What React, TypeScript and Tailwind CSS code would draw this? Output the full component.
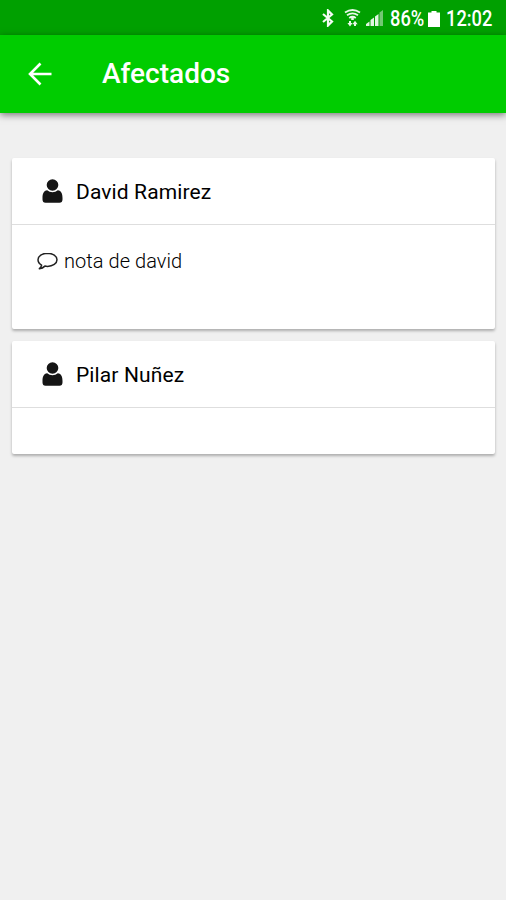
type Afectado = {
  name: string;
  note?: string;
};

const afectados: Afectado[] = [
  { name: "David Ramirez", note: "nota de david" },
  { name: "Pilar Nuñez" },
];

const StatusBar = () => {
  return (
    <div className="flex h-[35px] items-center bg-[#00a000] pl-[321px] pt-[2px] text-white">
      {/* Bluetooth */}
      <svg className="mb-[1px] h-[18px] w-[14px] shrink-0" viewBox="0 0 14 18" fill="none">
        <path
          d="M2 5l9 7.5L7 16.5v-15L11 5.5L2 13"
          stroke="#f4fbf4"
          strokeWidth="2.2"
        />
      </svg>
      {/* Wifi */}
      <svg
        className="mb-[1px] ml-[9px] h-[18px] w-[17px] shrink-0"
        viewBox="0 0 17 18"
        fill="none"
        stroke="#e8f7e8"
      >
        <path
          d="M1 3.5Q8.5-1.5 16 3.5M3 6.3Q8.5 2.5 14 6.3M5.2 9Q8.5 6.5 11.8 9"
          strokeWidth="1.8"
        />
        <path d="M8.5 8v3" strokeWidth="2.6" />
        <path d="M6 12v3M11 14v3" strokeWidth="2" />
        <path
          d="M3.4 14h5.2L6 17.4zM8.4 15.2h5.200L11 11.800z"
          fill="#e8f7e8"
          stroke="none"
        />
      </svg>
      {/* Signal */}
      <svg className="mb-[1px] ml-[5px] h-[18px] w-[18px] shrink-0" viewBox="0 0 18 18">
        <path
          d="M0 17v-2l3.5-2.5V17zM4.5 17v-6L8 8.5V17zM9 17V7.5L12.5 5v12z"
          fill="#e0f4e0"
        />
        <path d="M13.5 17V3.5L17 1v16z" fill="#73c873" />
      </svg>
      <div className="ml-[6px] mt-[3px] w-[38px] shrink-0">
        <span className="inline-block origin-left scale-x-[0.83] text-[22px] font-medium leading-[22px]">
          86%
        </span>
      </div>
      {/* Battery */}
      <svg className="h-[18px] w-[12px] shrink-0" viewBox="0 0 12 18">
        <path d="M3.5 1h5v1.5H12V17H0V2.5h3.5z" fill="#fff" />
      </svg>
      <div className="ml-[6px] mt-[3px] w-[50px] shrink-0">
        <span className="inline-block origin-left scale-x-[0.83] text-[22px] font-medium leading-[22px]">
          12:02
        </span>
      </div>
    </div>
  );
};

const Header = () => {
  return (
    <header className="relative flex h-[78px] items-center bg-[#00cc00] text-white shadow-[0_2px_7px_rgba(0,0,0,0.5)]">
      <button className="ml-[28px] shrink-0" aria-label="Volver">
        <svg className="h-[24px] w-[24px]" viewBox="0 0 24 24" fill="none">
          <path
            d="M23.5 12H2M12.5 1.5L2 12l10.5 10.5"
            stroke="#fff"
            strokeWidth="2.6"
          />
        </svg>
      </button>
      <h1 className="ml-[50px] whitespace-nowrap text-[28px] font-medium leading-8">
        Afectados
      </h1>
    </header>
  );
};

const UserIcon = () => {
  return (
    <svg className="h-[24px] w-[21px] shrink-0" viewBox="0 0 21 24" fill="#151515">
      <circle cx="10.5" cy="6" r="5.8" />
      <path d="M5.2 11.2C1.7 11.6.5 14.8.5 19v1.5c0 2 1.1 3.3 3 3.3h14c1.9 0 3-1.3 3-3.3V19c0-4.2-1.2-7.4-4.7-7.8-1.5 1.3-3.3 2-5.3 2s-3.8-.7-5.3-2z" />
    </svg>
  );
};

const CommentIcon = () => {
  return (
    <svg className="h-[18px] w-[21px] shrink-0" viewBox="0 0 21 18" fill="none">
      <path
        d="M10.5 1.2C5.2 1.2 1 4 1 7.8c0 2.2 1.4 4.1 3.6 5.3-.3 1.6-1.1 2.7-2.2 3.6 2.3-.3 4-1.1 5.5-2.6.8.2 1.7.3 2.6.3 5.3 0 9.5-2.9 9.5-6.6s-4.2-6.6-9.5-6.6z"
        stroke="#222"
        strokeWidth="1.5"
        strokeLinejoin="round"
      />
    </svg>
  );
};

const Card = ({ name, note }: Afectado) => {
  return (
    <div className="rounded-[2px] bg-white shadow-[0_2px_3px_rgba(0,0,0,0.28)]">
      <div className="flex h-[67px] items-center border-b-[1.5px] border-[#dedede] pl-[30px]">
        <UserIcon />
        <h2 className="ml-[13px] mt-[2px] text-[21px] font-normal leading-7 tracking-[0.12px] text-black">
          {name}
        </h2>
      </div>
      {note ? (
        <div className="flex h-[104px] items-start pl-[25px] pt-[22px]">
          <div className="flex items-center">
            <CommentIcon />
            <p className="ml-[6px] text-[20px] font-light leading-7 tracking-[0.05px] text-black">
              {note}
            </p>
          </div>
        </div>
      ) : (
        <div className="h-[46px]" />
      )}
    </div>
  );
};

const App = () => {
  return (
    <div className="min-h-screen bg-[#f0f0f0] font-['Roboto',sans-serif]">
      <StatusBar />
      <Header />
      <main className="flex flex-col gap-[12px] pl-[12px] pr-[11px] pt-[45px]">
        {afectados.map((item) => (
          <Card key={item.name} name={item.name} note={item.note} />
        ))}
      </main>
    </div>
  );
};

export default App;
